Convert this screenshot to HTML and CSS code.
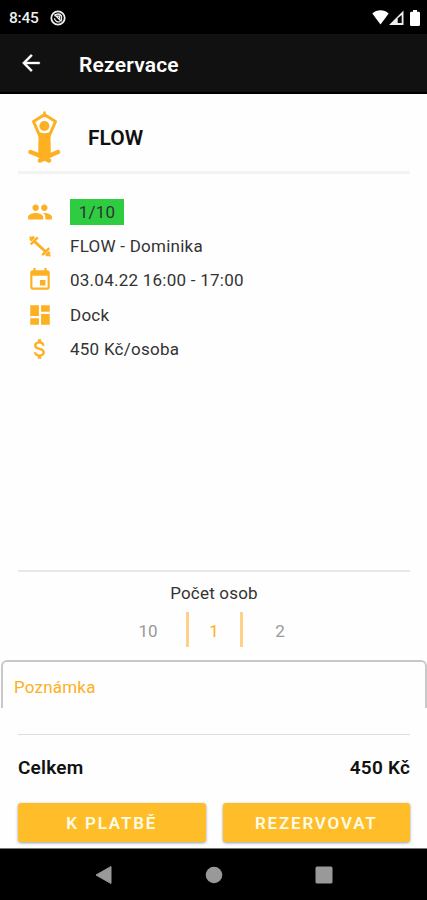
FILE: index.html
```html
<!DOCTYPE html>
<html lang="cs">
<head>
  <meta charset="UTF-8" />
  <meta name="viewport" content="width=device-width, initial-scale=1.0" />
  <title>Rezervace</title>
  <link rel="stylesheet" href="styles.css">
</head>
<body>
  <div class="status-bar">
    <span>8:45</span>
    <svg class="app-mark" width="16" height="16" viewBox="0 0 16 16">
      <circle cx="8" cy="8" r="6.7" fill="none" stroke="#eee" stroke-width="1.8" />
      <path d="M4.6 6.2a4 4 0 0 1 6.9-.4v4.8M4.5 8.2a4 4 0 0 0 5.6 3.4M4.5 4.5l7 7M7 6.2h2.6v2.5" fill="none" stroke="#eee" stroke-width="1.3" />
    </svg>
    <div class="signals">
      <svg width="17" height="15" viewBox="0 0 17 15"><path d="M.3 3.6C5-.8 12-.8 16.7 3.6L8.5 14.5z" fill="#fff" /></svg>
      <svg width="15" height="15" viewBox="0 0 15 15"><path fill-rule="evenodd" d="M0 15L14.5.6V15zM8.7 8.3V13h4V5z" fill="#eee" /></svg>
      <svg class="battery" width="10" height="16" viewBox="0 0 10 16"><path d="M3 0h4v1.7h1.6q1.4 0 1.4 1.4v11.4Q10 16 8.6 16H1.4Q0 16 0 14.5V3.1Q0 1.7 1.4 1.7H3z" fill="#fff" /></svg>
    </div>
  </div>

  <header class="app-bar">
    <svg width="26" height="26" viewBox="0 0 24 24"><path d="M20 11H7.83l5.59-5.59L12 4l-8 8 8 8 1.41-1.41L7.83 13H20z" fill="#fff" stroke="#fff" stroke-width=".3" /></svg>
    <h1>Rezervace</h1>
  </header>

  <main>
    <div class="lesson">
      <svg width="34" height="52" viewBox="0 0 34 52">
        <g fill="none" stroke="#fdb022" stroke-linecap="round" stroke-linejoin="round">
          <path d="M17 4L6.500 10.500L11.500 22M18 4L28.500 10.500L23.500 22" stroke-width="3" />
          <path d="M17.500 1.500V5" stroke-width="2.500" />
          <path d="M3.500 41L10 43.500L22 49.500M31 41L25 43.500L13 49.500" stroke-width="4.500" />
        </g>
        <circle cx="17.400" cy="15" r="5" fill="#fdb022" />
        <path d="M10 19.500C14 23 21 23 25 19.500L23.500 27L23.800 42L21 49.500L17.500 47.500L14 49.500L11.200 42L11.500 27z" fill="#fdb022" />
      </svg>
      <h2>FLOW</h2>
    </div>

    <ul class="details">
      <li>
        <svg viewBox="0 0 24 24"><path d="M16 11c1.66 0 2.99-1.34 2.99-3S17.66 5 16 5s-3 1.34-3 3 1.34 3 3 3zm-8 0c1.66 0 2.99-1.34 2.99-3S9.66 5 8 5 5 6.34 5 8s1.34 3 3 3zm0 2c-2.33 0-7 1.17-7 3.5V19h14v-2.5c0-2.33-4.67-3.5-7-3.5zm8 0c-.29 0-.62.02-.97.05 1.16.84 1.97 1.97 1.97 3.45V19h6v-2.5c0-2.33-4.67-3.5-7-3.5z" /></svg>
        <span class="capacity">1/10</span>
      </li>
      <li>
        <svg class="dumbbell" viewBox="0 0 24 24"><path d="M6.500 7.500L17.500 17.500" stroke-width="2.600" /><path d="M3.500 10.500L10 4M14 20.500L20.500 14" stroke-width="2.200" /><path d="M3 7L6.500 3.500M17.500 21L21 17.500" stroke-width="2.600" /><path d="M2.500 3.500L5 6M19 19L21.500 21.500" stroke-width="1.800" /></svg>
        <span>FLOW - Dominika</span>
      </li>
      <li>
        <svg viewBox="0 0 24 24"><path d="M17 12h-5v5h5v-5zM16 1v2H8V1H6v2H5c-1.11 0-1.99.9-1.99 2L3 19c0 1.1.89 2 2 2h14c1.1 0 2-.9 2-2V5c0-1.1-.9-2-2-2h-1V1h-2zm3 18H5V8h14v11z" /></svg>
        <span>03.04.22 16:00 - 17:00</span>
      </li>
      <li>
        <svg viewBox="0 0 24 24"><path d="M3 13h8V3H3v10zm0 8h8v-6H3v6zm10 0h8V11h-8v10zm0-18v6h8V3h-8z" /></svg>
        <span>Dock</span>
      </li>
      <li>
        <svg viewBox="0 0 24 24"><path d="M11.8 10.9c-2.27-.59-3-1.2-3-2.15 0-1.09 1.01-1.85 2.7-1.85 1.78 0 2.44.85 2.5 2.1h2.21c-.07-1.72-1.12-3.3-3.21-3.81V3h-3v2.16c-1.94.42-3.5 1.68-3.5 3.61 0 2.31 1.91 3.46 4.7 4.13 2.5.6 3 1.48 3 2.41 0 .69-.49 1.79-2.7 1.79-2.06 0-2.87-.92-2.98-2.1h-2.2c.12 2.19 1.76 3.42 3.68 3.83V21h3v-2.15c1.95-.37 3.5-1.5 3.5-3.55 0-2.84-2.43-3.81-4.7-4.4z" /></svg>
        <span>450 Kč/osoba</span>
      </li>
    </ul>

    <div class="people">
      <div class="people-label">Počet osob</div>
      <div class="picker">
        <span>10</span>
        <span class="selected">1</span>
        <span>2</span>
      </div>
    </div>

    <div class="note">Poznámka</div>

    <div class="total">
      <span>Celkem</span>
      <span>450 Kč</span>
    </div>

    <div class="actions">
      <button class="btn">K PLATBĚ</button>
      <button class="btn">REZERVOVAT</button>
    </div>
  </main>

  <nav class="nav-bar">
    <svg width="18" height="20" viewBox="0 0 18 20"><path d="M1 10L16 1.5V18.5z" fill="#999" stroke="#999" stroke-linejoin="round" /></svg>
    <svg width="18" height="18" viewBox="0 0 18 18"><circle cx="9" cy="9" r="8.3" fill="#999" /></svg>
    <svg width="18" height="18" viewBox="0 0 18 18"><rect x=".5" y=".5" width="17" height="17" rx="1.5" fill="#999" /></svg>
  </nav>
</body>
</html>
```
FILE: styles.css
```css
* {
  box-sizing: border-box;
}
body {
  margin: 0;
  height: 900px;
  display: flex;
  flex-direction: column;
  font-family: Roboto, sans-serif;
  background: #fefefe;
  color: #333;
  overflow: hidden;
}
.status-bar {
  height: 34px;
  display: flex;
  align-items: center;
  padding: 1px 7px 0 9px;
  background: #000;
  color: #eee;
  font-size: 15.5px;
  font-weight: 500;
  letter-spacing: -0.2px;
}
.app-mark {
  margin-left: 11px;
}
.signals {
  display: flex;
  align-items: center;
  margin-left: auto;
}
.battery {
  margin-left: 6px;
}
.app-bar {
  height: 60px;
  display: flex;
  align-items: center;
  padding: 0 18px;
  background: #111;
  border-bottom: 2px solid #000;
  color: #fff;
}
.app-bar h1 {
  margin: 4px 0 0 35px;
  font-size: 21px;
  font-weight: 600;
  letter-spacing: 0.2px;
}
main {
  flex: 1;
  display: flex;
  flex-direction: column;
}
.lesson {
  height: 80px;
  margin: 0 17px 0 18px;
  padding: 8px 0 0 9px;
  display: flex;
  align-items: center;
  border-bottom: 3px solid #f3f3f3;
}
.lesson h2 {
  margin: 3px 0 0 27px;
  font-size: 21px;
  font-weight: 600;
  color: #111;
}
.details {
  list-style: none;
  margin: 21px 0 0;
  padding: 0 27px;
}
.details li {
  height: 34.2px;
  display: flex;
  align-items: center;
  font-size: 17px;
  letter-spacing: 0.25px;
}
.details svg {
  width: 26px;
  height: 26px;
  margin-right: 17px;
  fill: #fdb022;
}
.details .dumbbell {
  fill: none;
  stroke: #fdb022;
}
.details .capacity {
  width: 54px;
  height: 26px;
  line-height: 27px;
  background: #2ecc40;
  text-align: center;
}
.people {
  height: 90px;
  margin: auto 17px 0 18px;
  border-top: 2px solid #e8e8e8;
  text-align: center;
}
.people-label {
  margin-top: 11px;
  font-size: 17px;
  letter-spacing: 0.2px;
  line-height: 20px;
}
.picker {
  display: flex;
  justify-content: center;
  margin-top: 9px;
  line-height: 38px;
  font-size: 17px;
  color: #999;
}
.picker span {
  width: 75px;
}
.picker .selected {
  width: 57px;
  height: 35px;
  border: solid #ffd08a;
  border-width: 0 3px;
  color: #fdb022;
}
.note {
  height: 48px;
  margin: 0 0 0 1px;
  padding: 15px 11px;
  border: 2px solid #c8c8c8;
  border-bottom: 0;
  border-radius: 6px 6px 0 0;
  font-size: 17px;
  letter-spacing: 0.2px;
  line-height: 20px;
  color: #fdb022;
}
.total {
  height: 69px;
  margin: 26px 17px 0 18px;
  padding-top: 22px;
  display: flex;
  justify-content: space-between;
  border-top: 1px solid #ddd;
  font-size: 19px;
  font-weight: 600;
  letter-spacing: 0.2px;
  line-height: 22px;
  color: #111;
}
.actions {
  display: flex;
  gap: 17px;
  padding: 0 17px 6px 18px;
}
.btn {
  flex: 1;
  height: 39px;
  padding: 1px 0 0;
  border: none;
  border-radius: 3px;
  background: #ffbe29;
  box-shadow: 0 1px 3px rgba(0, 0, 0, 0.4);
  color: #fffbe8;
  font: 600 17px Roboto, sans-serif;
  letter-spacing: 1.8px;
}
.nav-bar {
  height: 52px;
  display: flex;
  align-items: center;
  justify-content: center;
  gap: 92px;
  background: #000;
  border-top: 1px solid #777;
}
```
